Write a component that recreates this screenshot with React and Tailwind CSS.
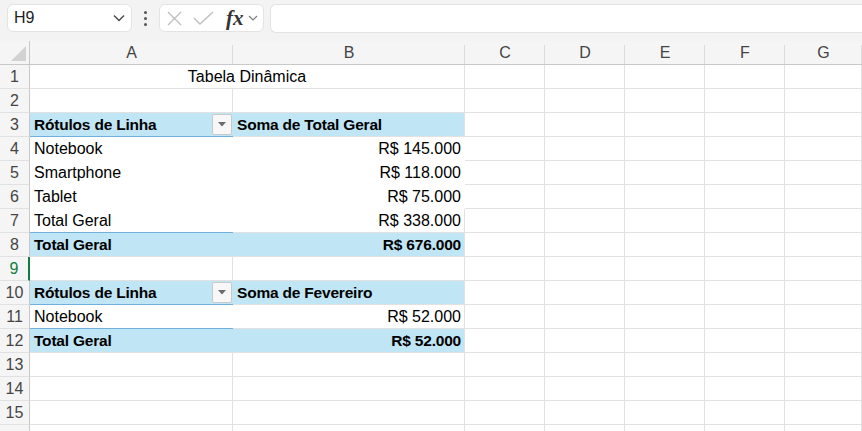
import React from "react";

const COLS = [
  { k: "A", w: 203 },
  { k: "B", w: 232 },
  { k: "C", w: 80 },
  { k: "D", w: 80 },
  { k: "E", w: 80 },
  { k: "F", w: 80 },
  { k: "G", w: 77 },
];

const GRAY = "border-[#e1e1e1]";
const BLUE = "border-[#6fb0dc]";
const NONE = "border-white";

function Dropdown() {
  return (
    <div className="absolute right-[1px] top-[1px] w-[20px] h-[21px] bg-[#f7f7f7] border border-[#c9c9c9] rounded-[2px] flex items-center justify-center">
      <svg width="8" height="5" viewBox="0 0 8 5">
        <path d="M0 0 L8 0 L4 4.5 Z" fill="#6b6b6b" />
      </svg>
    </div>
  );
}

function Cell({ w, bb, br, bg = "bg-white", children, cls = "", noR = false }) {
  return (
    <div
      style={{ width: w }}
      className={`relative h-[24px] shrink-0 border-b ${noR ? "" : "border-r"} ${bb} ${br || ""} ${bg} flex items-center overflow-hidden whitespace-nowrap ${cls}`}
    >
      {children}
    </div>
  );
}

function RowHeader({ n, active }) {
  return (
    <div
      className={`h-[24px] w-[30px] shrink-0 bg-[#f5f5f5] border-b border-[#e1e1e1] flex items-center justify-center text-[16px] ${
        active ? "text-[#107c41] border-r-2 border-r-[#107c41]" : "text-[#444] border-r border-r-[#c8c8c8]"
      }`}
    >
      {n}
    </div>
  );
}

function RestCells() {
  return COLS.slice(2).map((c) => <Cell key={c.k} w={c.w} bb={GRAY} br={GRAY} />);
}

const txt = "text-[16px] text-black";
const bold = "text-[15.5px] font-bold text-black tracking-[-0.2px]";

function Row({ n, children, active }) {
  return (
    <div className="flex">
      <RowHeader n={n} active={active} />
      {children}
      <RestCells />
    </div>
  );
}

function PivotHeader({ label, value }) {
  return (
    <>
      <Cell w={203} noR bb={BLUE} bg="bg-[#c0e6f5]" cls="pl-[4px]">
        <span className={bold}>{label}</span>
        <Dropdown />
      </Cell>
      <Cell w={232} bb={BLUE} br={GRAY} bg="bg-[#c0e6f5]" cls="pl-[4px]">
        <span className={bold}>{value}</span>
      </Cell>
    </>
  );
}

function PivotBody({ label, value, bb = NONE }) {
  return (
    <>
      <Cell w={203} noR bb={bb} cls="pl-[4px]">
        <span className={txt}>{label}</span>
      </Cell>
      <Cell w={232} bb={bb} br={GRAY} cls="justify-end pr-[3px]">
        <span className={txt}>{value}</span>
      </Cell>
    </>
  );
}

function PivotTotal({ value }) {
  return (
    <>
      <Cell w={203} noR bb={GRAY} bg="bg-[#c0e6f5]" cls="pl-[4px]">
        <span className={bold}>Total Geral</span>
      </Cell>
      <Cell w={232} bb={GRAY} br={GRAY} bg="bg-[#c0e6f5]" cls="justify-end pr-[3px]">
        <span className={bold}>{value}</span>
      </Cell>
    </>
  );
}

function Empty() {
  return (
    <>
      <Cell w={203} bb={GRAY} br={GRAY} />
      <Cell w={232} bb={GRAY} br={GRAY} />
    </>
  );
}

export default function App() {
  return (
    <div
      className="w-[862px] h-[431px] overflow-hidden bg-white select-none"
      style={{ fontFamily: '"Liberation Sans", Arial, sans-serif' }}
    >
      {/* formula bar */}
      <div className="h-[41px] bg-[#f3f3f3] flex items-start pt-[4px] pl-[7px]">
        <div className="w-[125px] h-[28px] bg-white border border-[#e3e3e3] rounded-[6px] flex items-center justify-between pl-[6px] pr-[6px]">
          <span className="text-[16px] text-[#222]">H9</span>
          <svg width="12" height="8" viewBox="0 0 12 8">
            <path d="M1 1.5 L6 6.5 L11 1.5" fill="none" stroke="#444" strokeWidth="1.3" />
          </svg>
        </div>
        <div className="w-[27px] h-[28px] flex flex-col items-center justify-center gap-[3px]">
          <div className="w-[3px] h-[3px] bg-[#555] rounded-full" />
          <div className="w-[3px] h-[3px] bg-[#555] rounded-full" />
          <div className="w-[3px] h-[3px] bg-[#555] rounded-full" />
        </div>
        <div className="w-[105px] h-[28px] bg-white border border-[#e3e3e3] rounded-[6px] flex items-center pl-[7px]">
          <svg width="15" height="15" viewBox="0 0 15 15">
            <path d="M1 1 L14 14 M14 1 L1 14" stroke="#bdbdbd" strokeWidth="1.3" fill="none" />
          </svg>
          <svg width="21" height="15" viewBox="0 0 21 15" className="ml-[11px]">
            <path d="M1 7 L7 13 L20 1" stroke="#bdbdbd" strokeWidth="1.3" fill="none" />
          </svg>
          <span
            className="ml-[12px] text-[21px] italic font-bold text-[#333] leading-none"
            style={{ fontFamily: '"Liberation Serif", "Times New Roman", serif' }}
          >
            fx
          </span>
          <svg width="10" height="6" viewBox="0 0 10 6" className="ml-[4px]">
            <path d="M1 1 L5 5 L9 1" fill="none" stroke="#777" strokeWidth="1.1" />
          </svg>
        </div>
        <div className="ml-[6px] flex-1 h-[29px] bg-white border border-[#e3e3e3] border-r-0 rounded-l-[6px]" />
      </div>

      {/* column headers */}
      <div className="flex h-[24px] bg-[#f5f5f5] border-b border-[#c8c8c8]">
        <div className="w-[30px] shrink-0 relative border-r border-[#c8c8c8]">
          <svg width="30" height="23" viewBox="0 0 30 23" className="absolute left-0 top-0">
            <path d="M11 20 L26 20 L26 5 Z" fill="#d2d2d2" />
          </svg>
        </div>
        {COLS.map((c) => (
          <div
            key={c.k}
            style={{ width: c.w }}
            className="shrink-0 relative flex items-center justify-center text-[16px] text-[#444]"
          >
            {c.k}
            <div className="absolute right-0 top-[4px] bottom-0 w-px bg-[#dcdcdc]" />
          </div>
        ))}
      </div>

      {/* rows */}
      <Row n={1}>
        <Cell w={435} bb={GRAY} br={GRAY} cls="justify-center">
          <span className={txt}>Tabela Dinâmica</span>
        </Cell>
      </Row>
      <Row n={2}>
        <Empty />
      </Row>
      <Row n={3}>
        <PivotHeader label="Rótulos de Linha" value="Soma de Total Geral" />
      </Row>
      <Row n={4}>
        <PivotBody label="Notebook" value="R$ 145.000" />
      </Row>
      <Row n={5}>
        <PivotBody label="Smartphone" value="R$ 118.000" />
      </Row>
      <Row n={6}>
        <PivotBody label="Tablet" value="R$ 75.000" />
      </Row>
      <Row n={7}>
        <PivotBody label="Total Geral" value="R$ 338.000" bb={BLUE} />
      </Row>
      <Row n={8}>
        <PivotTotal value="R$ 676.000" />
      </Row>
      <Row n={9} active>
        <Empty />
      </Row>
      <Row n={10}>
        <PivotHeader label="Rótulos de Linha" value="Soma de Fevereiro" />
      </Row>
      <Row n={11}>
        <PivotBody label="Notebook" value="R$ 52.000" bb={BLUE} />
      </Row>
      <Row n={12}>
        <PivotTotal value="R$ 52.000" />
      </Row>
      <Row n={13}>
        <Empty />
      </Row>
      <Row n={14}>
        <Empty />
      </Row>
      <Row n={15}>
        <Empty />
      </Row>
      <Row n="">
        <Empty />
      </Row>
    </div>
  );
}
